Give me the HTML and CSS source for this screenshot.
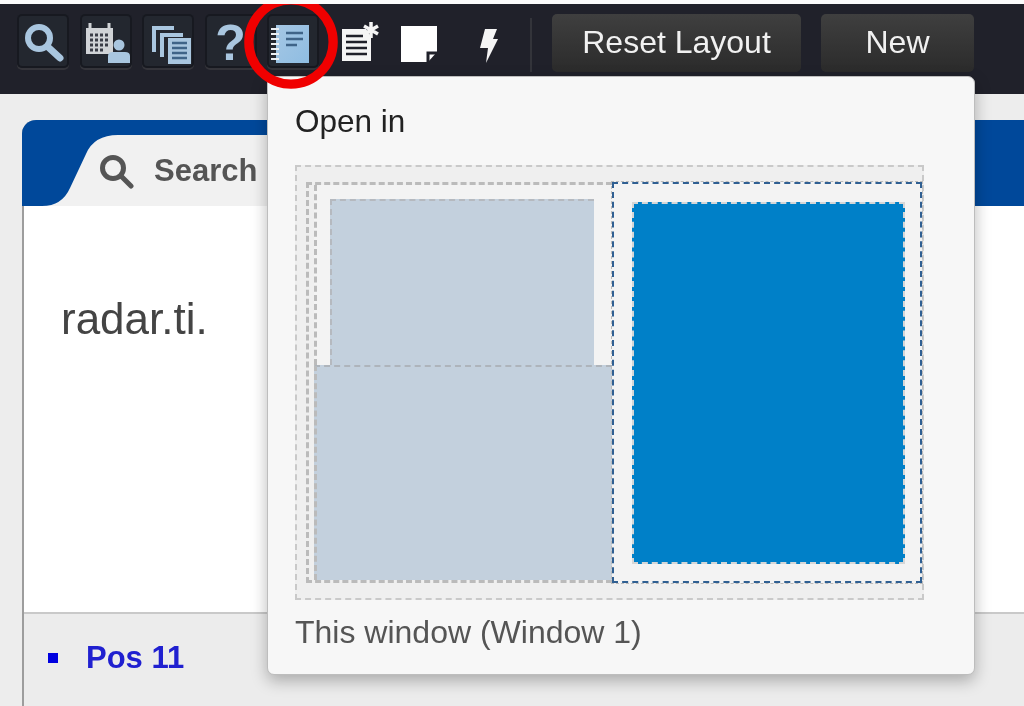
FILE: index.html
```html
<!DOCTYPE html>
<html lang="en">
<head>
<meta charset="utf-8">
<title>Open in</title>
<link rel="stylesheet" href="styles.css">
</head>
<body>
<header class="toolbar">
  <button class="tool boxed"><svg viewBox="0 0 52 54" class="ico"><circle cx="22" cy="24" r="11" class="ln"/><path d="M31 33l12 11" class="ln thick"/></svg></button>
  <button class="tool boxed"><svg viewBox="0 0 52 54" class="ico"><path d="M6 14h27v26H6z" class="wash"/><path d="M10 15V9M29 15V9" class="ln thin grey"/><path d="M10 21h20M10 26h20M10 31h20M10 36h14" class="grid"/><circle cx="39" cy="31" r="5.5" fill="#a9c6df"/><path d="M28 49v-7q0-4 5-4h12q5 0 5 4v7z" fill="#a9c6df"/></svg></button>
  <button class="tool boxed"><svg viewBox="0 0 52 54" class="ico"><path d="M12 38V14h20M20 43V21h21" class="pages"/><path d="M26 24h23v26H26z" fill="#a9c6df"/><path d="M30 29h15M30 34h15M30 39h15M30 44h15" class="rule"/></svg></button>
  <button class="tool boxed"><span class="qmark">?</span></button>
  <button class="tool boxed"><svg viewBox="0 0 52 54" class="ico"><defs><linearGradient id="nb" x1="0" y1="0" x2="1" y2="1"><stop offset="0" stop-color="#a5c7e4"/><stop offset="1" stop-color="#8fbde2"/></linearGradient></defs><path d="M9 11h33v38H9z" fill="url(#nb)"/><path d="M4 15h8M4 20h8M4 25h8M4 30h8M4 35h8M4 40h8M4 45h8" class="coil"/><path d="M19 19h17M19 25h17M19 31h11" class="rule"/></svg></button>
  <button class="tool plain first"><svg viewBox="0 0 38 40" class="ico"><path d="M0 8h24l4 6h1v26H0z" fill="#f5f5f5"/><path d="M4 15h17M4 21h21M4 27h21M4 33h21" class="rule dark"/><path d="M29 1v16M22 5l14 8M36 5l-14 8" class="star"/></svg></button>
  <button class="tool plain note"><svg viewBox="0 0 36 36" class="ico"><path d="M0 0h36v26l-9 10H0z" fill="#fff"/><path d="M36 27h-9v9" class="fold"/></svg></button>
  <button class="tool plain bolt"><svg viewBox="0 0 20 34" class="ico"><path d="M7 0h12l-4 10h5L8 34l2-15H2z" fill="#f5f5f5"/></svg></button>
  <span class="sep"></span>
  <button class="text-btn reset">Reset Layout</button>
  <button class="text-btn new">New</button>
</header>

<main class="page">
  <section class="panel">
    <div class="panel-head">
      <svg class="tab-shape" viewBox="0 0 300 72" preserveAspectRatio="none"><path d="M0 72q20 0 28-18L44 20Q52 1 76 1H300V72z" fill="#f1f1f1"/></svg>
      <div class="tab">
        <svg viewBox="0 0 36 36" class="tab-ico"><circle cx="15" cy="15" r="10.5" class="tab-ln"/><path d="M23 23l10 10" class="tab-ln"/></svg>
        <span>Search</span>
      </div>
    </div>
    <div class="panel-body"><p>radar.ti.</p></div>
    <div class="panel-foot">
      <ul><li><a>Pos 11</a></li></ul>
    </div>
  </section>
</main>

<aside class="popup">
  <h2>Open in</h2>
  <div class="diagram">
    <div class="split">
      <div class="left">
        <div class="left-top"><div class="pane"></div></div>
        <div class="left-bottom"></div>
      </div>
      <div class="right"><div class="pane-on"></div></div>
    </div>
  </div>
  <p class="caption">This window (Window 1)</p>
</aside>

<svg class="ring" viewBox="0 0 100 100"><circle cx="50" cy="50" r="43"/></svg>
</body>
</html>
```
FILE: styles.css
```css
* { box-sizing: border-box; }
html, body { margin: 0; height: 100%; }
body {
  position: relative;
  width: 1024px;
  height: 706px;
  overflow: hidden;
  background: #ededed;
  border-top: 4px solid #fbfbfb;
  font-family: "Liberation Sans", Arial, sans-serif;
  filter: blur(.5px);
}
.toolbar {
  display: flex;
  align-items: flex-start;
  height: 90px;
  padding: 10px 0 0 17px;
  background: #20212a;
}
button { font-family: inherit; padding: 0; margin: 0; cursor: pointer; }
.tool { display: block; flex: none; background: none; border: 0; color: #a9c6df; }
.boxed {
  width: 52px;
  height: 54px;
  margin-right: 10.5px;
  background: #23272f;
  border-radius: 5px;
  box-shadow: inset 0 0 0 2px #171920, 0 2px 0 #34343a;
}
.plain { width: 38px; height: 40px; margin-top: 7px; }
.plain.first { margin-left: 12.5px; }
.plain.note { width: 36px; height: 36px; margin: 12px 0 0 21px; }
.plain.bolt { width: 20px; height: 34px; margin: 15px 0 0 41px; }
.ico { display: block; width: 100%; height: 100%; }
.ln { fill: none; stroke: #a9c6df; stroke-width: 6; }
.ln.thick { stroke-width: 7; stroke-linecap: round; }
.ln.thin { stroke-width: 3; }
.ln.grey { stroke: #d0d3d6; }
.wash { fill: #d0d3d6; }
.grid { stroke: #3a3d46; stroke-width: 3; stroke-dasharray: 3 2; fill: none; }
.pages { fill: none; stroke: #a9c6df; stroke-width: 4; }
.rule { stroke: #3f6488; stroke-width: 2.5; fill: none; }
.rule.dark { stroke: #20212a; }
.coil { stroke: #e9eef2; stroke-width: 2; fill: none; }
.star { stroke: #f5f5f5; stroke-width: 3.5; fill: none; }
.fold { stroke: #20212a; stroke-width: 3; fill: none; }
.qmark {
  display: block;
  font-size: 50px;
  font-weight: 700;
  line-height: 58px;
  color: #a9c6df;
  text-align: center;
}
.sep {
  flex: none;
  width: 2px;
  height: 54px;
  margin: 4px 20px 0 32px;
  background: #33343a;
}
.text-btn {
  flex: none;
  height: 58px;
  margin-right: 20px;
  padding-bottom: 1px;
  border: 0;
  border-radius: 5px;
  background: linear-gradient(#3f3f3f, #2b2b2b);
  color: #f1f1f1;
  font-size: 32px;
  text-align: center;
}
.reset { width: 249px; }
.new { width: 153px; }
.page { padding: 26px 0 0 22px; }
.panel {
  display: flex;
  flex-direction: column;
  height: 590px;
  border-left: 2px solid #9d9d9d;
  border-radius: 14px 0 0 0;
}
.panel-head {
  position: relative;
  height: 86px;
  margin-left: -2px;
  background: #00489a;
  border-radius: 14px 0 0 0;
}
.tab-shape {
  position: absolute;
  left: 20px;
  bottom: 0;
  width: 300px;
  height: 72px;
}
.tab {
  position: absolute;
  left: 76px;
  top: 33px;
  display: flex;
  align-items: center;
  gap: 20px;
  font-size: 31px;
  font-weight: 700;
  color: #555;
}
.tab-ico { width: 36px; height: 36px; }
.tab-ln { fill: none; stroke: #555; stroke-width: 5; stroke-linecap: round; }
.panel-body {
  height: 408px;
  padding: 88px 0 0 37px;
  background: #fff;
  border-bottom: 2px solid #c9c9c9;
}
.panel-body p { margin: 0; font-size: 44px; line-height: 50px; color: #444; }
.panel-foot { flex: 1; background: #ececec; }
.panel-foot ul { list-style: none; margin: 0; padding: 26px 0 0 24px; }
.panel-foot li { display: flex; align-items: center; gap: 28px; }
.panel-foot li::before { content: ""; width: 10px; height: 10px; background: #0000e0; }
.panel-foot a { font-size: 31px; font-weight: 700; line-height: 36px; color: #2020d0; }
.popup {
  position: absolute;
  left: 267px;
  top: 72px;
  width: 708px;
  height: 599px;
  padding: 22px 27px 0;
  background: #f7f7f7;
  border: 1px solid #bdbdbd;
  border-radius: 7px;
  box-shadow: 0 6px 16px rgba(0, 0, 0, .28);
}
.popup h2 { margin: 0; font-size: 31.5px; font-weight: 400; line-height: 44px; color: #222; }
.diagram {
  width: 629px;
  height: 435px;
  margin-top: 22px;
  padding: 15px 0 15px 9px;
  background: #efefef;
  border: 2px dashed #c9c9c9;
}
.split { display: grid; grid-template-columns: 306px 1fr; height: 100%; }
.left { display: flex; flex-direction: column; border: 3px dashed #bbb; border-right: 0; padding-left: 5px; }
.left-top { height: 180px; padding: 14px 18px 0 13px; border-left: 3px dashed #bbb; background: #f3f3f3; }
.pane { height: 100%; background: #c3d0dd; border: 2px dashed #b5b9bf; border-bottom: 0; border-right: 0; }
.left-bottom { flex: 1; background: #c3d0dd; border-left: 3px dashed #bbb; border-top: 2px dashed #aeb4bb; }
.right { padding: 18px 15px 17px 18px; background: #f3f3f3; border: 2px dashed #2f5f92; outline: 1px dashed #bbb; }
.pane-on { height: 100%; background: #0080c8; border: 2px dashed #d6d6d6; }
.caption { margin: 14px 0 0; font-size: 32px; line-height: 36px; color: #555; }
.ring {
  position: absolute;
  left: 241.5px;
  top: -11.5px;
  width: 98px;
  height: 98px;
}
.ring circle { fill: none; stroke: #f00000; stroke-width: 9.5; }
```
